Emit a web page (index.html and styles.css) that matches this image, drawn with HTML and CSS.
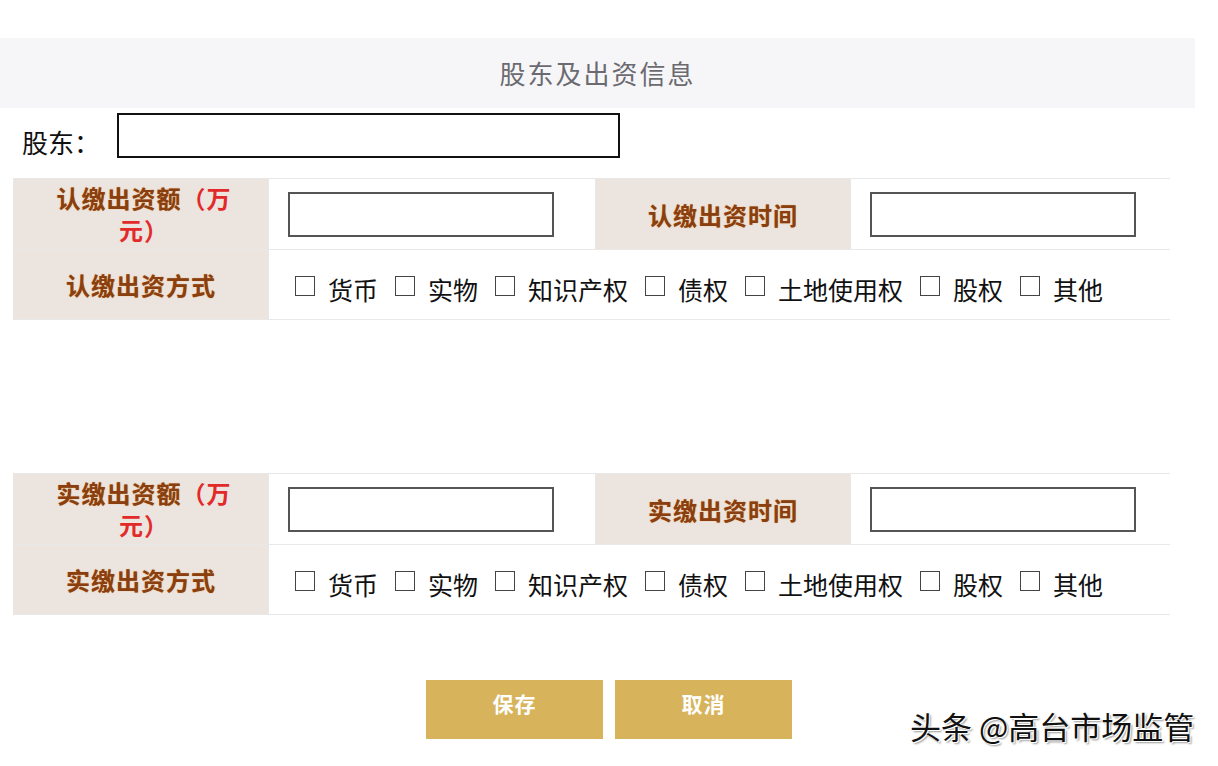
FILE: index.html
```html
<!DOCTYPE html>
<html lang="zh-CN">
<head>
<meta charset="UTF-8">
<title>股东及出资信息</title>
<link rel="stylesheet" href="styles.css">
</head>
<body>
	<div class="page">
		<div class="head">股东及出资信息</div>

		<div class="holder">
			<span class="holder-label">股东：</span>
			<input class="holder-input" type="text">
		</div>

		<!-- 认缴 -->
		<div class="grid">
			<div class="cell label two"><p>认缴出资额<span class="red">（万</span><br><span class="red">元）</span></p></div>
			<div class="cell"><input class="box" type="text"></div>
			<div class="cell label">认缴出资时间</div>
			<div class="cell"><input class="box" type="text"></div>
			<div class="cell label">认缴出资方式</div>
			<div class="cell wide">
				<label class="chk"><input type="checkbox">货币</label>
				<label class="chk"><input type="checkbox">实物</label>
				<label class="chk"><input type="checkbox">知识产权</label>
				<label class="chk"><input type="checkbox">债权</label>
				<label class="chk"><input type="checkbox">土地使用权</label>
				<label class="chk"><input type="checkbox">股权</label>
				<label class="chk"><input type="checkbox">其他</label>
			</div>
		</div>

		<!-- 实缴 -->
		<div class="grid second">
			<div class="cell label two"><p>实缴出资额<span class="red">（万</span><br><span class="red">元）</span></p></div>
			<div class="cell"><input class="box" type="text"></div>
			<div class="cell label">实缴出资时间</div>
			<div class="cell"><input class="box" type="text"></div>
			<div class="cell label">实缴出资方式</div>
			<div class="cell wide">
				<label class="chk"><input type="checkbox">货币</label>
				<label class="chk"><input type="checkbox">实物</label>
				<label class="chk"><input type="checkbox">知识产权</label>
				<label class="chk"><input type="checkbox">债权</label>
				<label class="chk"><input type="checkbox">土地使用权</label>
				<label class="chk"><input type="checkbox">股权</label>
				<label class="chk"><input type="checkbox">其他</label>
			</div>
		</div>

		<div class="btns">
			<a href="#none" class="btn">保存</a>
			<a href="#none" class="btn">取消</a>
		</div>

		<div class="mark">头条 @高台市场监管</div>
	</div>
</body>
</html>
```
FILE: styles.css
```css
*{margin: 0; padding: 0; box-sizing: border-box;}
a{text-decoration: none; color: inherit;}
body{
	background: #fff;
	font-family: "Noto Sans CJK SC", "Noto Sans", sans-serif;
	color: #111;
}
.page{position: relative; width: 1218px; height: 766px; padding-top: 38px;}

.head{
	width: 1195px; height: 70px;
	background: #f6f6f8;
	color: #6a6a70;
	font-size: 26px; letter-spacing: 2px;
	text-align: center; line-height: 70px;
}

.holder{display: flex; align-items: center; padding-left: 22px; margin-top: 5px; height: 44px;}
.holder-label{font-size: 26px; width: 95px; line-height: 1; padding-top: 14px;}
.holder-input{width: 503px; height: 45px; border: 2px solid #111; background: #fff;}

.grid{
	display: grid;
	grid-template-columns: 254px 326px 254px 323px;
	grid-template-rows: 70px 69px;
	margin: 21px 0 0 13px;
	width: 1157px;
	border: 1px solid #e8e8e8;
	background: #e8e8e8;
	gap: 1px;
}
.grid.second{margin-top: 153px;}
.cell{background: #fff; display: flex; align-items: center; padding-left: 19px;}
.cell.wide{grid-column: 2 / 5; padding-left: 26px; padding-top: 10px;}
.label{
	background: #ebe4df;
	justify-content: center; padding: 0 10px;
	color: #8a3f10;
	font-size: 24px; font-weight: bold; letter-spacing: 1px;
	text-shadow: 0 0 1px #d98a3a;
	text-align: center;
}
.label.two{line-height: 32px; padding: 0 24px 0 30px;}
.red{color: #e32a2a; text-shadow: none;}
.box{width: 266px; height: 45px; border: 2px solid #555; background: #fff;}

.chk{display: flex; align-items: center; font-size: 25px; margin-right: 17px; line-height: 1;}
.chk input{
	appearance: none; -webkit-appearance: none;
	width: 20px; height: 20px; margin: -8px 13px 0 0;
	border: 1.5px solid #444; background: #fff;
}

.btns{display: flex; justify-content: center; gap: 12px; margin-top: 65px;}
.btn{
	width: 177px; height: 59px;
	background: #d7b45b;
	color: #fff; font-size: 21px; font-weight: bold; letter-spacing: 1px;
	display: flex; align-items: center; justify-content: center;
	padding-bottom: 14px;
}

.mark{
	position: absolute; left: 910px; top: 703px;
	font-size: 31px; color: #111;
	text-shadow: 1px 1px 0 #fff, -1px -1px 0 #fff, 2px 2px 2px #999;
	white-space: nowrap;
}
```
